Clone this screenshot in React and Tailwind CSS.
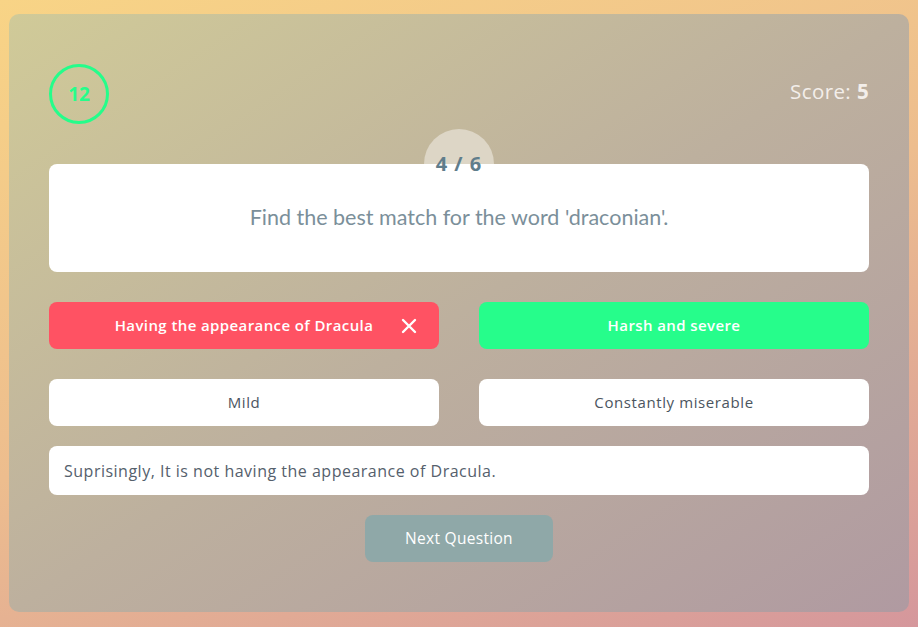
import React from "react";

function X() {
  return (
    <svg width="16" height="16" viewBox="0 0 16 16" fill="none" stroke="white" strokeWidth="2.4" strokeLinecap="round">
      <path d="M2 2L14 14M14 2L2 14" />
    </svg>
  );
}

export default function App() {
  const font = { fontFamily: '"Open Sans", "DejaVu Sans", sans-serif' };
  return (
    <div
      className="w-[918px] h-[627px] pt-[14px] pl-[9px] pr-[9px] bg-[linear-gradient(160deg,#f8d486_0%,#edbd8e_50%,#d5979c_100%)]"
      style={font}
    >
      <div className="w-[900px] h-[598px] rounded-[10px] bg-[linear-gradient(to_bottom_right,#d0ca98_0%,#bdb09e_50%,#b09aa1_100%)] px-[40px] pt-[50px]">
        <div className="flex items-start justify-between h-[100px]">
          <div className="w-[60px] h-[60px] rounded-full border-[3px] border-[#25fd8a] flex items-center justify-center text-[#25fd8a] text-[19px] font-bold">
            12
          </div>
          <div className="text-[20.5px] text-[#f3eeea] mt-[12px] tracking-[0.4px]">
            Score: <span className="font-bold">5</span>
          </div>
        </div>
        <div className="relative">
          <div className="absolute left-1/2 -translate-x-1/2 -top-[35px] w-[70px] h-[70px] rounded-full bg-[#ddd6c6]"></div>
          <div className="relative bg-white rounded-[8px] h-[108px] flex flex-col items-center">
            <div className="text-[20px] font-bold text-[#607d8b] -mt-[13px] leading-[26px] tracking-[1px]">4 / 6</div>
            <div
              className="mt-[24px] text-[21.5px] text-[#7b8f9a]"
              style={{ fontFamily: '"Lato", "Noto Sans", sans-serif' }}
            >
              Find the best match for the word 'draconian'.
            </div>
          </div>
        </div>
        <div className="grid grid-cols-2 gap-x-[40px] gap-y-[30px] mt-[30px]">
          <div className="h-[47px] rounded-[8px] bg-[#ff5263] text-white text-[15px] tracking-[0.4px] font-semibold flex items-center justify-center relative">
            <span>Having the appearance of Dracula</span>
            <span className="absolute right-[22px] top-1/2 -translate-y-1/2 flex"><X /></span>
          </div>
          <div className="h-[47px] rounded-[8px] bg-[#26fd8b] text-white text-[15px] tracking-[0.4px] font-semibold flex items-center justify-center">
            Harsh and severe
          </div>
          <div className="h-[47px] rounded-[8px] bg-white text-[#4b5560] text-[15px] tracking-[0.6px] font-medium flex items-center justify-center">
            Mild
          </div>
          <div className="h-[47px] rounded-[8px] bg-white text-[#4b5560] text-[15px] tracking-[0.6px] font-medium flex items-center justify-center">
            Constantly miserable
          </div>
        </div>
        <div className="mt-[20px] h-[49px] rounded-[8px] bg-white flex items-center px-[15px] text-[16px] tracking-[0.5px] text-[#55606c]">
          Suprisingly, It is not having the appearance of Dracula.
        </div>
        <div className="flex justify-center mt-[20px]">
          <div className="w-[188px] h-[47px] rounded-[8px] bg-[#8fa8a8] text-white text-[15.5px] tracking-[0.3px] flex items-center justify-center">
            Next Question
          </div>
        </div>
      </div>
    </div>
  );
}
